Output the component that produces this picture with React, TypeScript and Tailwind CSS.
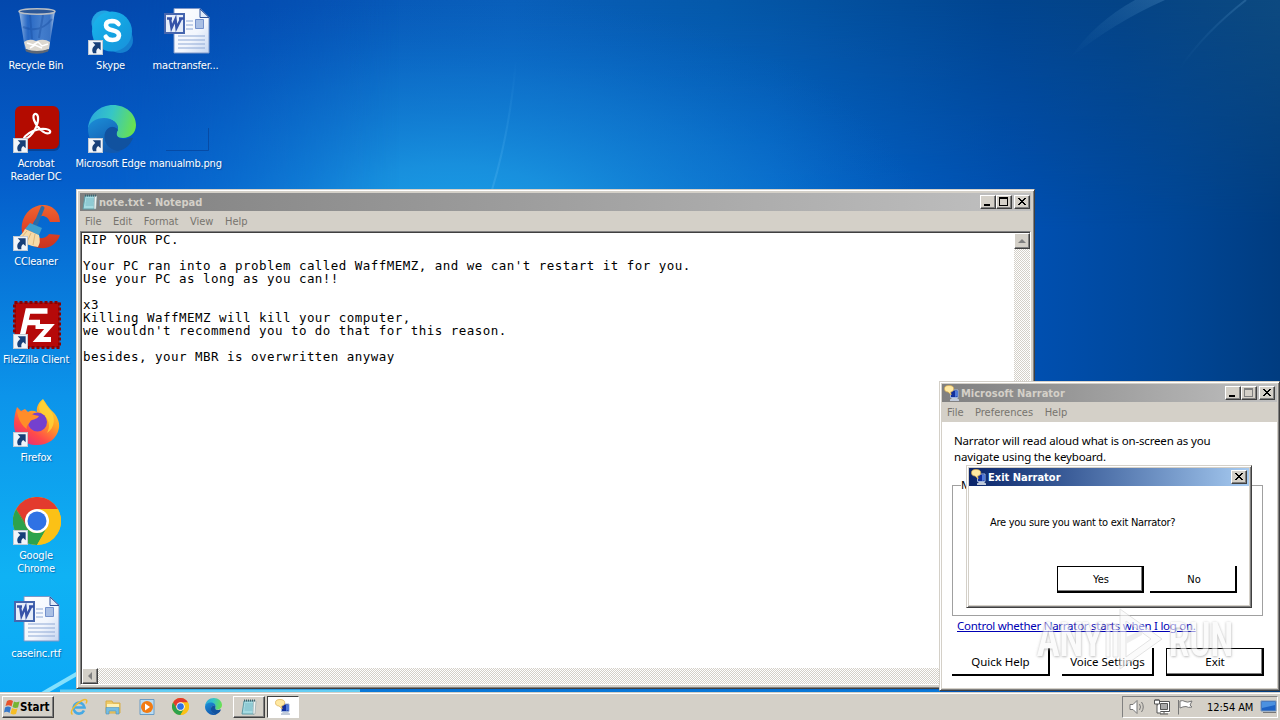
import React from "react";

type IconProps = { size?: number };

const tahoma = "font-['DejaVu_Sans_Condensed','DejaVu_Sans',sans-serif]";
const segoe = "font-['Noto_Sans','Open_Sans',sans-serif]";
const raised =
  "border border-t-white border-l-white border-r-[#404040] border-b-[#404040] shadow-[inset_-1px_-1px_0_#808080]";
const dither =
  "bg-[repeating-conic-gradient(#d4d0c8_0_25%,#ffffff_0_50%)] bg-[length:2px_2px]";

function RecycleBinIcon() {
  return (
    <svg width="48" height="48" viewBox="0 0 48 48">
      <defs>
        <linearGradient id="bin" x1="0" x2="1">
          <stop offset="0" stopColor="#b6d0ee" stopOpacity=".85" />
          <stop offset=".25" stopColor="#3c78cf" stopOpacity=".6" />
          <stop offset=".6" stopColor="#78a6e2" stopOpacity=".55" />
          <stop offset=".85" stopColor="#5f8fd2" stopOpacity=".6" />
          <stop offset="1" stopColor="#cfdff2" stopOpacity=".9" />
        </linearGradient>
      </defs>
      <path d="M6 4 L12 42 Q24 48 36 42 L42 4Z" fill="url(#bin)" />
      <path d="M11 35 Q16 31 23 34 Q31 31 37 35 L36 42 Q24 47 13 42Z" fill="#dcd8d0" />
      <path d="M14 36l6 2 5-3 4 4 6-2M17 41l5-3 7 3" stroke="#fff" fill="none" strokeWidth="1.500" />
      <path d="M12 42 Q24 46 36 42 L35 44.500 Q24 49 13 44.500Z" fill="#5f6875" />
      <path d="M17 8 L19 32M30 8 L26 31M10 20 Q27 27 39 12" stroke="#174b9e" opacity=".4" fill="none" strokeWidth="2" />
      <ellipse cx="24" cy="4.500" rx="18" ry="2.800" fill="#2c5796" stroke="#b9bec4" strokeWidth="1.600" />
    </svg>
  );
}

function SkypeIcon() {
  return (
    <svg width="48" height="48" viewBox="0 0 48 48">
      <defs>
        <linearGradient id="sk" x1="0" y1="0" x2="1" y2="1">
          <stop offset="0" stopColor="#1bb6ee" />
          <stop offset=".6" stopColor="#14a0e0" />
          <stop offset="1" stopColor="#1b90dc" />
        </linearGradient>
      </defs>
      <circle cx="16" cy="16" r="12.500" fill="#23a4e2" />
      <circle cx="32" cy="33" r="13" fill="#1580cf" />
      <circle cx="24" cy="24.500" r="20" fill="url(#sk)" />
      <path
        d="M30.500 17 Q28.500 14 24 14 Q18 14.200 18 18.200 Q18 21.800 24.500 23.300 Q31 24.800 31 28.500 Q30.400 33 24.500 33 Q19.500 33 17.800 29.700"
        fill="none"
        stroke="#fff"
        strokeWidth="4.600"
        strokeLinecap="round"
      />
    </svg>
  );
}

function WordDocIcon() {
  return (
    <svg width="48" height="48" viewBox="0 0 48 48">
      <defs>
        <linearGradient id="page" x1="0" y1="0" x2="1" y2="1">
          <stop offset="0" stopColor="#fff" />
          <stop offset=".6" stopColor="#f2f6fd" />
          <stop offset="1" stopColor="#c5d5f0" />
        </linearGradient>
      </defs>
      <path d="M11 1.500h26l9 9V46H11z" fill="url(#page)" stroke="#7f98c8" />
      <path d="M37 2v8.500h9z" fill="#dfe9f7" stroke="#2f529a" />
      <path d="M23 14h7M23 18h7M23 22h7M15 29h27M15 33h27M15 37h27M15 41h27" stroke="#8fa9d6" strokeWidth="1.200" />
      <path d="M32.500 12.500h8v9h-8z" fill="#a9bfe4" stroke="#7491cc" />
      <path d="M2 7h19v19H2z" fill="#e6edf9" stroke="#4666ae" strokeWidth="2" />
      <path d="M7 11l1.500 10 4-9 1 9 5-10M4 11.500h5M16 11.500h5" fill="none" stroke="#3653a8" strokeWidth="2.400" />
    </svg>
  );
}

function AcrobatIcon() {
  return (
    <svg width="48" height="48" viewBox="0 0 48 48">
      <rect x="4" y="3" width="43" height="43" rx="6" fill="#0a2c66" opacity=".5" />
      <rect x="2" y="1" width="44" height="43" rx="6" fill="#b30b00" />
      <path
        d="M12 34 C19 32 26 20 25 12 C24 7 19 8 21 15 C24 23 32 30 36.500 28 C40 24 29 22 20 26 C13 29 9 34 12 34Z"
        fill="none"
        stroke="#fff"
        strokeWidth="2.200"
        strokeLinejoin="round"
      />
    </svg>
  );
}

function EdgeIcon({ size = 48 }: IconProps) {
  return (
    <svg width={size} height={size} viewBox="0 0 48 48">
      <defs>
        <linearGradient id="eg1" x1="0" y1=".4" x2="1" y2=".6">
          <stop offset="0" stopColor="#2aa8dc" />
          <stop offset=".45" stopColor="#36c6c6" />
          <stop offset="1" stopColor="#6be24b" />
        </linearGradient>
        <linearGradient id="eg2" x1="0" y1="0" x2=".5" y2="1">
          <stop offset="0" stopColor="#1c8fd8" />
          <stop offset="1" stopColor="#1259ae" />
        </linearGradient>
      </defs>
      <path d="M0 24 C1 9 12 0 25 0 C38 0 48 9 48 20 C48 28 42 33 35 33 C29 33 27 30 29 27 C32 21 27 14 18 14 C9 14 2 18 0 24Z" fill="url(#eg1)" />
      <path d="M0 24 C1 17 8 13 16 13 C25 13 31 19 30 25 C25 18 16 23 17 32 C18 40 25 46 33 46 C30 48 27 48 23 48 C10 47 0 37 0 24Z" fill="url(#eg2)" />
      <path d="M30 25 C27 29 29 34 36 34 C40 34 42 32 45 33 C42 41 35 46 29 46 C21 44 16 38 16.500 31 C17 23 25 19 30 25Z" fill="#11529f" />
    </svg>
  );
}

function CCleanerIcon() {
  return (
    <svg width="48" height="48" viewBox="0 0 48 48">
      <defs>
        <linearGradient id="cc" x1="0" y1="0" x2="0" y2="1">
          <stop offset="0" stopColor="#f0652f" />
          <stop offset=".5" stopColor="#e04526" />
          <stop offset="1" stopColor="#c93420" />
        </linearGradient>
      </defs>
      <path
        d="M46 13 L47 19 L37 19 C35 13 29 11 24 15 C18 20 18 29 23 33 C28 37 33 35 36 31 L47 32 C44 41 36 46 27 45 C14 43 7 33 9 21 C11 9 21 1 32 2 C39 3 44 7 46 13Z"
        fill="url(#cc)"
      />
      <path d="M29.500 5 L22 23" stroke="#2c6ca6" strokeWidth="4" strokeLinecap="round" />
      <path d="M17 20 L29 25 L26 32 L12 26Z" fill="#3d9fcf" />
      <path d="M12 26 L26 32 Q28 39 25 44 Q13 43 4 35 Q9 32 12 26Z" fill="#f6dba8" />
      <path d="M14 28l-6 7M18 30l-4 9M22 31l-2 11" stroke="#dcb67a" />
    </svg>
  );
}

function FileZillaIcon() {
  return (
    <svg width="48" height="48" viewBox="0 0 48 48">
      <rect x="1.500" y="1.500" width="45" height="45" fill="#b50909" stroke="#8b0000" strokeWidth="3" strokeDasharray="3 2" />
      <path d="M9 36.500 L15 10 H34.500 M12.500 21.500 H27" fill="none" stroke="#fff" strokeWidth="5.500" />
      <path d="M22.500 25.500 H36.500 L25 38.500 H38" fill="none" stroke="#fff" strokeWidth="4.800" />
    </svg>
  );
}

function FirefoxIcon() {
  return (
    <svg width="48" height="48" viewBox="0 0 48 48">
      <defs>
        <linearGradient id="ff" x1=".9" y1="0" x2=".2" y2="1">
          <stop offset="0" stopColor="#ffe43a" />
          <stop offset=".4" stopColor="#ffa025" />
          <stop offset=".72" stopColor="#ff4a4a" />
          <stop offset="1" stopColor="#e22a80" />
        </linearGradient>
      </defs>
      <path
        d="M30 0 C33 4 35 8 38 11 C44 16 47 23 46 29 C44 40 35 46 24 46 C11 46 1 38 1 25 C1 19 2 14 4 8 L8 12 L12 10 L15 13 C18 11 21 12 24 13 C23 8 26 3 30 0Z"
        fill="url(#ff)"
      />
      <path d="M30 1 C25 6 25 11 29 15 C36 19 38 27 34 34 C42 29 43 18 37 11 C34 8 32 5 30 1Z" fill="#ffd638" opacity=".8" />
      <circle cx="24.500" cy="23" r="9.500" fill="#7440cf" />
      <path d="M4 10 C7 14 13 13 17 14 C20 16 23 16 26 17 C24 21 18 20 17 23 C15 26 13 27 14 30 C10 28 4 20 4 10Z" fill="#ff8d28" />
    </svg>
  );
}

function ChromeIcon({ size = 48 }: IconProps) {
  return (
    <svg width={size} height={size} viewBox="0 0 48 48">
      <circle cx="24" cy="24" r="24" fill="#fbc116" />
      <path d="M24 24 L3.200 12 A24 24 0 0 1 44.800 12Z" fill="#e33b2e" />
      <path d="M3.200 12 L13.600 30 A12 12 0 0 0 34.400 30 L24 48 A24 24 0 0 1 3.200 12Z" fill="#2da24c" />
      <path d="M3.200 12 L13.600 30 L24 13Z" fill="#e33b2e" />
      <path d="M3.200 12 L13.600 30 L11 24Z" fill="#2da24c" />
      <path d="M24 48 L34.400 30 A12 12 0 0 0 34.400 18 L24 12 H44.800 A24 24 0 0 1 24 48Z" fill="#fbc116" />
      <circle cx="24" cy="24" r="12" fill="#fff" />
      <circle cx="24" cy="24" r="9.500" fill="#2f72e4" />
    </svg>
  );
}

function ManualIcon() {
  return (
    <svg width="48" height="48" viewBox="0 0 48 48">
      <path d="M3 45.500h42.500V23" fill="none" stroke="#07449a" opacity=".75" />
    </svg>
  );
}

function ShortcutArrow() {
  return (
    <svg className="absolute bottom-0 left-0" width="15" height="15" viewBox="0 0 16 16">
      <rect x=".5" y=".5" width="15" height="15" fill="#f1f5fa" stroke="#c3cad4" />
      <path d="M5 2.500H13.500v8.500l-2.600-2.600C9 10 8.500 11.500 9 14 H5.500 C3.500 10.500 5 7.500 7.800 5.300Z" fill="#173f78" />
    </svg>
  );
}

function NotepadIcon({ size = 16 }: IconProps) {
  return (
    <svg width={size} height={size} viewBox="0 0 16 16">
      <path d="M3 2h11l-1 13H1z" fill="#a5dbe2" stroke="#5f9aa5" />
      <path d="M4 5h8M4 7h8M3.500 9h8M3.500 11h8" stroke="#68adb9" strokeWidth=".7" />
      <path d="M12.500 2H15l-1 13h-2z" fill="#eef4f2" stroke="#83949a" strokeWidth=".5" />
      <path d="M3 1.500h11" stroke="#3e656f" strokeDasharray="1 1" strokeWidth="2" />
    </svg>
  );
}

function NarratorIcon({ size = 16 }: IconProps) {
  return (
    <svg width={size} height={size} viewBox="0 0 16 16">
      <path d="M6.500 5H14v7.500H6.500z" fill="#122f9c" stroke="#9db4dc" />
      <path d="M11 6h3v5l-3 1z" fill="#4f79d8" />
      <path d="M8 13h5l2 1.500V16H6v-1.500z" fill="#c1cbdb" />
      <path d="M5 .5c3 0 4.700 1 4.700 3.200S8 7 6.500 7l.7 3-3-3C2 7 .5 6 .5 3.700S2 .5 5 .5Z" fill="#ffe9a2" stroke="#d8aa4c" strokeWidth=".7" />
    </svg>
  );
}

type Shortcut = { name: string; icon: React.ReactNode; linked?: boolean };

const shortcuts: Shortcut[] = [
  { name: "Recycle Bin", icon: <RecycleBinIcon /> },
  { name: "Acrobat Reader DC", icon: <AcrobatIcon />, linked: true },
  { name: "CCleaner", icon: <CCleanerIcon />, linked: true },
  { name: "FileZilla Client", icon: <FileZillaIcon />, linked: true },
  { name: "Firefox", icon: <FirefoxIcon />, linked: true },
  { name: "Google Chrome", icon: <ChromeIcon />, linked: true },
  { name: "caseinc.rtf", icon: <WordDocIcon /> },
  { name: "Skype", icon: <SkypeIcon />, linked: true },
  { name: "Microsoft Edge", icon: <EdgeIcon />, linked: true },
  { name: "mactransfer...", icon: <WordDocIcon /> },
  { name: "manualmb.png", icon: <ManualIcon /> },
];

function DesktopIcon({ item }: { item: Shortcut }) {
  return (
    <div className="flex flex-col items-center">
      <div className="relative h-12 w-12">
        {item.icon}
        {item.linked && <ShortcutArrow />}
      </div>
      <span
        className={`mt-1 mr-[2px] text-center text-[11px] leading-[13px] tracking-[-0.200px] text-white [text-shadow:1px_1px_1px_#003a8088] ${
          item.name.includes("Reader") || item.name.includes("Google") ? "w-[60px]" : "whitespace-nowrap"
        }`}
      >
        {item.name}
      </span>
    </div>
  );
}

function DesktopIcons() {
  return (
    <div className="flex pt-[7px] pl-px">
      <div className="grid w-[72px] auto-rows-[98px]">
        {shortcuts.slice(0, 7).map((item) => (
          <DesktopIcon key={item.name} item={item} />
        ))}
      </div>
      <div className="ml-px grid w-[75px] auto-rows-[98px]">
        {shortcuts.slice(7, 9).map((item) => (
          <DesktopIcon key={item.name} item={item} />
        ))}
      </div>
      <div className="grid w-[75px] auto-rows-[98px]">
        {shortcuts.slice(9).map((item) => (
          <DesktopIcon key={item.name} item={item} />
        ))}
      </div>
    </div>
  );
}

function CaptionButton({ kind, muted = false }: { kind: "min" | "max" | "close"; muted?: boolean }) {
  return (
    <button className={`flex h-[14px] w-4 items-center justify-center bg-[#d4d0c8] ${raised}`}>
      <svg width="12" height="10" viewBox="0 0 12 10" fill={muted ? "#808080" : "#000"} shapeRendering="crispEdges">
        {kind === "min" && <path d="M2 7h6v2H2z" />}
        {kind === "max" && <path fillRule="evenodd" d="M1 0h9v9H1zM2 2v6h7V2z" />}
        {kind === "close" && (
          <path d="M2 1h2v1h1v1h2V2h1V1h2v1H9v1H8v1H7v1h1v1h1v1h1v1H8V7H7V6H5v1H4v1H2V7h1V6h1V5h1V4H4V3H3V2H2z" />
        )}
      </svg>
    </button>
  );
}

type TitleBarProps = {
  title: string;
  icon: React.ReactNode;
  active?: boolean;
  controls: React.ReactNode;
  className?: string;
};

function TitleBar({ title, icon, active = false, controls, className = "pr-px" }: TitleBarProps) {
  return (
    <div
      className={`flex h-[18px] shrink-0 items-center pl-[2px] ${className} ${
        active ? "bg-linear-to-r from-[#0a246a] to-[#a6caf0]" : "bg-linear-to-r from-[#808080] to-[#c0c0c0]"
      }`}
    >
      {icon}
      <span
        className={`ml-px flex-1 pt-px text-[11px] leading-[14px] font-bold whitespace-nowrap ${
          active ? "text-white" : "text-[#d4d0c8]"
        }`}
      >
        {title}
      </span>
      {controls}
    </div>
  );
}

function MenuBar({ items, className }: { items: string[]; className: string }) {
  return (
    <div
      className={`flex h-[20px] shrink-0 items-center bg-[#d4d0c8] pt-[2px] pl-[5px] text-[11px] text-[#77746e] ${className}`}
    >
      {items.map((item) => (
        <span key={item}>{item}</span>
      ))}
    </div>
  );
}

const frame =
  "border border-t-[#d4d0c8] border-l-[#d4d0c8] border-r-[#404040] border-b-[#404040] bg-[#d4d0c8] shadow-[inset_1px_1px_0_#fff,inset_-1px_-1px_0_#808080]";

const note = `RIP YOUR PC.

Your PC ran into a problem called WaffMEMZ, and we can't restart it for you.
Use your PC as long as you can!!

x3
Killing WaffMEMZ will kill your computer,
we wouldn't recommend you to do that for this reason.

besides, your MBR is overwritten anyway`;

function ScrollButton({ points }: { points: string }) {
  return (
    <div className={`flex h-4 w-4 shrink-0 items-center justify-center bg-[#d4d0c8] ${raised}`}>
      <svg width="8" height="8" viewBox="0 0 8 8">
        <polygon points={points} fill="#808080" />
      </svg>
    </div>
  );
}

function NotepadWindow() {
  return (
    <div className={`absolute top-[189px] left-[76px] flex h-[500px] w-[959px] flex-col p-[3px] ${frame}`}>
      <TitleBar
        title="note.txt - Notepad"
        icon={<NotepadIcon />}
        controls={
          <>
            <CaptionButton kind="min" />
            <CaptionButton kind="max" />
            <span className="w-[2px]" />
            <CaptionButton kind="close" />
          </>
        }
      />
      <MenuBar className="gap-[11.500px]" items={["File", "Edit", "Format", "View", "Help"]} />
      <div className="flex min-h-0 flex-1 border border-t-[#808080] border-r-white border-b-white border-l-[#808080] bg-white shadow-[inset_1px_1px_0_#404040]">
        <div className="flex min-w-0 flex-1 flex-col pt-px pl-px">
          <pre className="flex-1 pl-px font-['DejaVu_Sans_Mono',monospace] text-[12.500px] leading-[13px] tracking-[0.470px] text-black">
            {note}
          </pre>
          <div className={`flex h-4 ${dither}`}>
            <ScrollButton points="6,0 6,8 2,4" />
          </div>
        </div>
        <div className={`mt-px mb-4 w-4 ${dither}`}>
          <ScrollButton points="0,6 8,6 4,2" />
        </div>
      </div>
    </div>
  );
}

function PushButton({ label, isDefault = false, className = "" }: { label: string; isDefault?: boolean; className?: string }) {
  return (
    <button
      className={`flex items-center justify-center border-black bg-white text-black ${
        isDefault ? "border-2 border-t-[1px] border-l-[1px] shadow-[inset_-1px_-1px_0_#808080]" : "border-r-2 border-b-2"
      } ${className}`}
    >
      {label}
    </button>
  );
}

function NarratorWindow() {
  return (
    <div className={`absolute top-[381px] left-[939px] flex h-[310px] w-[341px] flex-col p-[2px] ${frame}`}>
      <TitleBar
        title="Microsoft Narrator"
        icon={<NarratorIcon />}
        className="pr-[2px]"
        controls={
          <>
            <CaptionButton kind="min" />
            <CaptionButton kind="max" muted />
            <span className="w-[2px]" />
            <CaptionButton kind="close" />
          </>
        }
      />
      <MenuBar className="gap-[11.500px]" items={["File", "Preferences", "Help"]} />
      <div className={`flex flex-1 flex-col bg-white pt-[11px] pr-[13px] pl-[10px] ${segoe} text-[11.500px] text-black`}>
        <p className="w-[280px] pl-[2px] leading-4 tracking-[-0.160px]">
          Narrator will read aloud what is on-screen as you navigate using the keyboard.
        </p>
        <fieldset className="mt-[12px] mr-px h-[139px] border border-[#a0a0a0] pl-2">
          <legend className="leading-4">M</legend>
        </fieldset>
        <a className="mt-[2px] ml-[5px] leading-4 tracking-[-0.270px] whitespace-nowrap text-[#0000b4] underline">
          Control whether Narrator starts when I log on.
        </a>
        <div className="mt-[14px] flex gap-3 tracking-[-0.050px]">
          <PushButton label="Quick Help" className="h-7 w-[98px] pt-px pl-px" />
          <PushButton label="Voice Settings" className="h-7 w-[92px] pt-px pl-px whitespace-nowrap" />
          <PushButton label="Exit" isDefault className="h-7 w-[98px] pl-px" />
        </div>
      </div>
    </div>
  );
}

function ExitDialog() {
  return (
    <div className={`absolute top-[465px] left-[966px] flex h-[143px] w-[286px] flex-col p-[2px] ${frame}`}>
      <TitleBar
        title="Exit Narrator"
        icon={<NarratorIcon />}
        active
        className="pr-[2px]"
        controls={<CaptionButton kind="close" />}
      />
      <div className="flex flex-1 flex-col bg-white px-3 pt-[30px] text-[11px] text-black">
        <p className="pl-[9px] leading-[14px] tracking-[-0.270px] whitespace-nowrap">Are you sure you want to exit Narrator?</p>
        <div className="mt-[36px] flex justify-end gap-[6px]">
          <PushButton label="Yes" isDefault className="h-[27px] w-[87px] pt-[2px] pl-[2px]" />
          <PushButton label="No" className="h-[27px] w-[87px] pt-[3px] pl-[3px]" />
        </div>
      </div>
    </div>
  );
}

function Watermark() {
  return (
    <div className="absolute top-[608px] left-[1037px] flex h-[62px] w-[197px] items-center opacity-60">
      <span className="w-[64px] origin-left scale-x-[0.680] pt-[2px] font-['Roboto',sans-serif] text-[49px] leading-[56px] font-bold text-[#fafafa] [text-shadow:1px_1px_3px_#999,-1px_0_3px_#ccc]">
        ANY
      </span>
      <svg className="mx-1 shrink-0" width="60" height="62" viewBox="0 0 60 62" fill="#fafafa" stroke="#d0d0d0">
        <path d="M1 16h4v33H1zM8 16h5v33H8z" />
        <path d="M15 1l42 30-42 30zM21 13v36l25-18z" fillRule="evenodd" />
        <path d="M21 36l16-9v-5l-16 7z" fill="#e4e4e4" stroke="none" />
      </svg>
      <span className="w-[65px] origin-left scale-x-[0.650] pt-[2px] font-['Roboto',sans-serif] text-[49px] leading-[56px] font-bold text-[#fafafa] [text-shadow:1px_1px_3px_#999,-1px_0_3px_#ccc]">
        RUN
      </span>
    </div>
  );
}

function StartFlag() {
  return (
    <svg width="16" height="16" viewBox="0 0 16 16">
      <path d="M3 2q3-2 6 0L7.500 7.500Q5 5.500 1.500 7z" fill="#e8532b" />
      <path d="M10 2.500q2 1.500 5.500 0L14 8.500q-3 1-5.500-.5z" fill="#76b532" />
      <path d="M1 8.500q3-2 6 0L5.500 14Q3 12 0 13.500z" fill="#3779ca" />
      <path d="M8 9q3 1.500 5.500.5L12 15q-3 1-5.500-.5z" fill="#f6bd25" />
    </svg>
  );
}

function IeIcon() {
  return (
    <svg width="18" height="18" viewBox="0 0 18 18" fill="none">
      <path d="M14 12.500A5.500 5.500 0 1 1 14.500 9.500H5" stroke="#46a9e4" strokeWidth="2.600" />
      <path d="M2.500 16.500C-1 14 5 6 12 2.500c4-2 6-.5 4 3" stroke="#efba2d" strokeWidth="1.500" />
    </svg>
  );
}

function ExplorerIcon() {
  return (
    <svg width="18" height="18" viewBox="0 0 18 18">
      <path d="M2 3h6l1 2h7v10H2z" fill="#eecb68" stroke="#d8ad47" />
      <path d="M3 6h12v5H3z" fill="#fff1b5" />
      <path d="M2 16V9.500h13V16h-3v-3H5v3z" fill="#75bde3" stroke="#4f91bb" strokeWidth=".6" />
    </svg>
  );
}

function MediaIcon() {
  return (
    <svg width="18" height="18" viewBox="0 0 18 18">
      <path d="M2 1.500h14v15H2z" fill="#badcf3" stroke="#6a9dc6" />
      <circle cx="9" cy="9" r="6" fill="#f27b13" />
      <path d="M7 5.500v7l5-3.500z" fill="#fff" />
    </svg>
  );
}

function Tray() {
  return (
    <div className="flex h-[22px] items-center border border-t-[#808080] border-r-white border-b-white border-l-[#808080] pl-[6px]">
      <svg width="17" height="16" viewBox="0 0 17 16" fill="none" stroke="#777">
        <path d="M1 5.500h3l4-4v13l-4-4H1z" fill="#fff" />
        <path d="M10.500 5q2 3 0 6M12.500 3q3.500 5 0 10" />
      </svg>
      <svg className="ml-[7px]" width="17" height="16" viewBox="0 0 17 16" fill="none" stroke="#555">
        <path d="M5.500 3.500h10v9h-10z" fill="#a9a9a9" stroke="#fff" strokeWidth="3" />
        <path d="M4.500 2.500h12v10h-12zM7.500 4.500h7v6h-7zM7 15h8M11 12.500v2" />
        <path d="M1.500 1v4h5V1zM3 0v2M5 0v2M4 5v9h4" fill="#fff" />
      </svg>
      <svg className="ml-[7px]" width="17" height="16" viewBox="0 0 17 16" fill="#fff" stroke="#777">
        <path d="M1.500 1v14.500M3 2q3-1 5 .5 2 1.500 7-.5l-2 4 2 2q-4 1-6-.5Q6 7.500 3 9z" />
      </svg>
      <span className="ml-[13px] w-[46px] pt-[2px] text-[11px] tracking-[-0.080px] whitespace-nowrap text-black">12:54 AM</span>
      <svg className="ml-[7px]" width="17" height="16" viewBox="0 0 17 16">
        <path d="M1 2h15v10H1z" fill="#1d62c4" stroke="#7695bb" />
        <path d="M2 3h13v3L2 9z" fill="#4b91e0" />
        <path d="M3 13.500h13" stroke="#777" />
      </svg>
    </div>
  );
}

function Taskbar() {
  return (
    <div className="absolute inset-x-0 bottom-0 flex h-[28px] items-center border-t border-[#d4d0c8] bg-[#d4d0c8] pt-px pl-[2px] shadow-[inset_0_1px_0_#fff]">
      <button className={`flex h-[22px] w-[52px] items-center pl-px text-[11.500px] font-bold text-black ${raised}`}>
        <StartFlag />
        <span className="pt-px">Start</span>
      </button>
      <div className="ml-[16px] flex gap-4">
        <IeIcon />
        <ExplorerIcon />
        <MediaIcon />
        <ChromeIcon size={17} />
        <EdgeIcon size={17} />
      </div>
      <div className="ml-[11px] flex gap-[2px]">
        <div className={`flex h-[22px] w-8 items-center justify-center ${raised}`}>
          <NotepadIcon />
        </div>
        <div className="flex h-[22px] w-8 items-center justify-center border border-t-[#404040] border-r-white border-b-white border-l-[#404040] bg-white">
          <NarratorIcon />
        </div>
      </div>
      <div className="ml-auto pr-[2px]">
        <Tray />
      </div>
    </div>
  );
}

function Wallpaper() {
  return (
    <svg className="absolute inset-0" width="1280" height="720" viewBox="0 0 1280 720">
      <defs>
        <linearGradient id="sky" x1="0" y1="0" x2="1" y2="0">
          <stop offset="0" stopColor="#0350b4" />
          <stop offset=".2" stopColor="#0653b6" />
          <stop offset=".4" stopColor="#0a5fba" />
          <stop offset=".56" stopColor="#0559aa" />
          <stop offset=".78" stopColor="#024590" />
          <stop offset=".88" stopColor="#054486" />
          <stop offset="1" stopColor="#0d4a80" />
        </linearGradient>
        <linearGradient id="deep" x1="0" y1="0" x2="1" y2="0">
          <stop offset="0" stopColor="#0768d2" />
          <stop offset=".6" stopColor="#046bd4" />
          <stop offset=".8" stopColor="#0050b2" />
          <stop offset=".92" stopColor="#004696" />
          <stop offset="1" stopColor="#003c80" />
        </linearGradient>
        <linearGradient id="down" x1="0" y1="0" x2="0" y2="1">
          <stop offset="0" stopColor="#fff" stopOpacity="0" />
          <stop offset=".32" stopColor="#fff" />
        </linearGradient>
        <mask id="downMask">
          <rect width="1280" height="720" fill="url(#down)" />
        </mask>
        <radialGradient id="glow" gradientUnits="userSpaceOnUse" cx="0" cy="0" r="1" gradientTransform="translate(450 240) scale(480 250)">
          <stop offset="0" stopColor="#1ba4ea" />
          <stop offset=".3" stopColor="#1a94df" stopOpacity=".9" />
          <stop offset=".65" stopColor="#1480d2" stopOpacity=".5" />
          <stop offset="1" stopColor="#0a68c4" stopOpacity="0" />
        </radialGradient>
        <linearGradient id="left" x1="0" y1="0" x2="0" y2="1">
          <stop offset="0" stopColor="#0348ad" />
          <stop offset=".25" stopColor="#045ecb" />
          <stop offset=".55" stopColor="#0c94ea" />
          <stop offset=".8" stopColor="#0fb2f4" />
          <stop offset="1" stopColor="#0aa6f6" />
        </linearGradient>
        <linearGradient id="fade" x1="0" x2="1">
          <stop offset="0" stopColor="#fff" />
          <stop offset=".25" stopColor="#fff" />
          <stop offset="1" stopColor="#fff" stopOpacity="0" />
        </linearGradient>
        <mask id="leftMask">
          <rect width="400" height="720" fill="url(#fade)" />
        </mask>
        <linearGradient id="ray" x1="0" y1="0" x2="0" y2="1">
          <stop offset="0" stopColor="#4aa6ea" stopOpacity="0" />
          <stop offset="1" stopColor="#4ab0ee" stopOpacity=".4" />
        </linearGradient>
        <linearGradient id="beam" x1="1" y1="0" x2="0" y2="1">
          <stop offset="0" stopColor="#5a98cc" stopOpacity=".3" />
          <stop offset="1" stopColor="#3a80b8" stopOpacity="0" />
        </linearGradient>
      </defs>
      <rect width="1280" height="720" fill="url(#sky)" />
      <rect width="1280" height="720" fill="url(#deep)" mask="url(#downMask)" />
      <rect width="1280" height="720" fill="url(#glow)" />
      <rect width="400" height="720" fill="url(#left)" mask="url(#leftMask)" />
      <path d="M516 60 Q510 130 492 190" stroke="url(#ray)" strokeWidth="2" fill="none" />
      <path d="M1246 0 Q1205 32 1180 68" stroke="url(#beam)" strokeWidth="2" fill="none" />
      <path d="M1135 0 Q1095 22 1070 58 Q1115 22 1165 0Z" fill="url(#beam)" />
      <path d="M42 694 L80 672" stroke="#a3efff" strokeWidth="4" opacity=".8" />
      <path d="M60 691h300" stroke="#65cdf2" strokeWidth="3" />
      <path d="M360 691h580" stroke="#0a78d8" strokeWidth="3" />
    </svg>
  );
}

export default function App() {
  return (
    <main className={`relative h-[720px] w-[1280px] overflow-hidden bg-[#0768c8] ${tahoma}`}>
      <Wallpaper />
      <div className="relative">
        <DesktopIcons />
      </div>
      <NotepadWindow />
      <NarratorWindow />
      <ExitDialog />
      <Watermark />
      <Taskbar />
    </main>
  );
}
